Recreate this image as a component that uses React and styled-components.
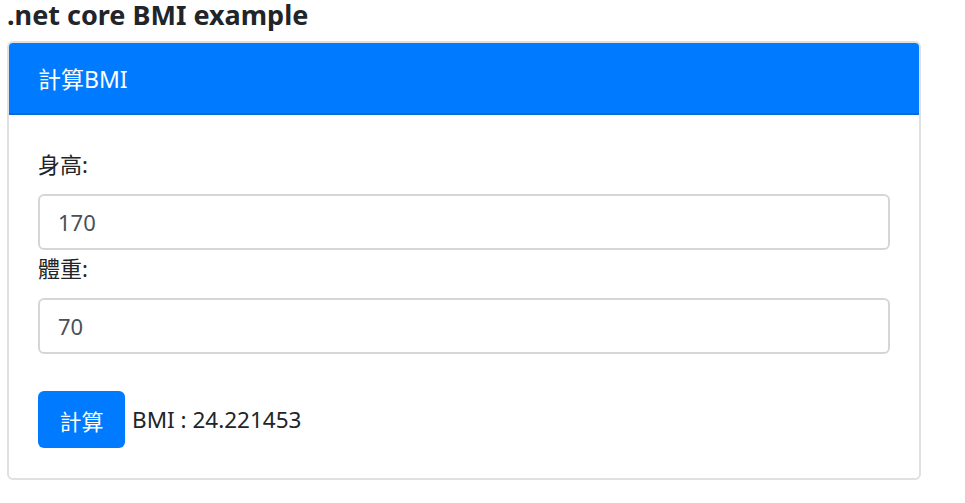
import React from "react"
import styled, { createGlobalStyle } from "styled-components"

const GlobalStyle = createGlobalStyle`
  body {
    margin: 0;
    background: #fff;
    font-family: "Noto Sans", "Noto Sans CJK TC", sans-serif;
    color: #212529;
  }
`

const Page = styled.div`
  padding: 0 44px 0 7px;
`

const Title = styled.h2`
  margin: 0 0 12px;
  font-size: 27px;
  line-height: 29px;
  font-weight: 700;
  color: #212529;
`

const Card = styled.div`
  width: 910px;
  border: 2px solid #e0e0e0;
  border-radius: 6px;
  overflow: hidden;
`

const CardHeader = styled.div`
  height: 70px;
  display: flex;
  align-items: center;
  padding: 0 29px;
  background: #007bff;
  border-bottom: 2px solid #0a6bd3;
  color: #fff;
  font-size: 23px;
`

const CardBody = styled.div`
  padding: 31px 29px 30px;
`

const Label = styled.label`
  display: block;
  font-size: 22px;
  line-height: 36px;
  margin-bottom: 12px;
`

const Input = styled.input`
  display: block;
  box-sizing: border-box;
  width: 100%;
  height: 56px;
  padding: 0 18px;
  border: 2px solid #d4d7da;
  border-radius: 6px;
  font-family: inherit;
  font-size: 22px;
  color: #495057;
  outline: none;
`

const Actions = styled.div`
  display: flex;
  align-items: center;
  gap: 7px;
  margin-top: 37px;
  font-size: 22.5px;
`

const Button = styled.button`
  height: 57px;
  width: 87px;
  padding: 0;
  border: none;
  border-radius: 6px;
  background: #007bff;
  color: #fff;
  font-family: inherit;
  font-size: 22px;
`

const App = () => {
  return (
    <Page>
      <GlobalStyle />
      <Title>.net core BMI example</Title>
      <Card>
        <CardHeader>計算BMI</CardHeader>
        <CardBody>
          <Label>身高:</Label>
          <Input defaultValue="170" />
          <Label>體重:</Label>
          <Input defaultValue="70" />
          <Actions>
            <Button>計算</Button>
            <span>BMI : 24.221453</span>
          </Actions>
        </CardBody>
      </Card>
    </Page>
  )
}

export default App
